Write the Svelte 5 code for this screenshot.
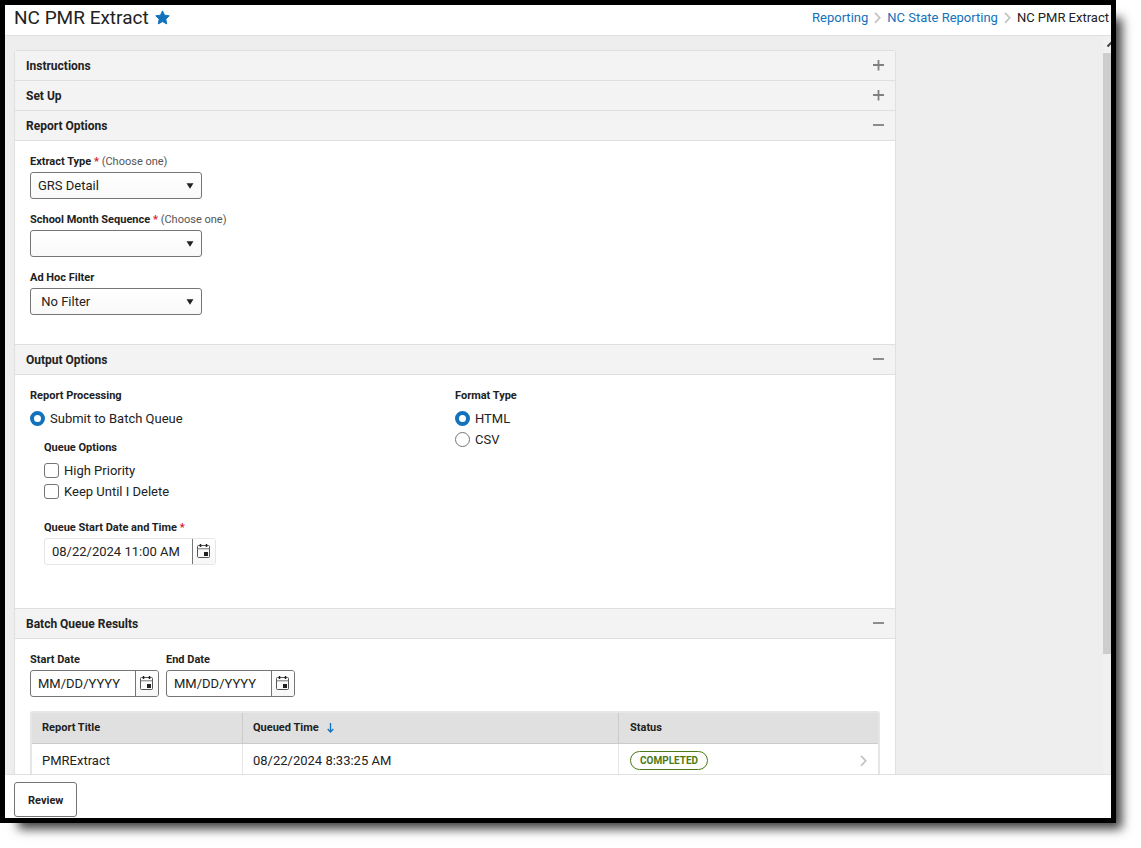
<script lang="ts">
	let open = $state({ instructions: false, setup: false, report: true, output: true, batch: true });

	let extractType = $state('grs');
	let monthSequence = $state('');
	let filter = $state('none');
	let processing = $state('batch');
	let format = $state('html');
	let highPriority = $state(false);
	let keep = $state(false);
	let queueStart = $state('08/22/2024 11:00 AM');

	const results = [{ title: 'PMRExtract', queued: '08/22/2024 8:33:25 AM', status: 'COMPLETED' }];
</script>

{#snippet sectionHead(key: keyof typeof open, title: string)}
	<h2>
		<button type="button" class="section-head" aria-expanded={open[key]} onclick={() => (open[key] = !open[key])}>
			<span>{title}</span>
			<svg width="11" height="11" viewBox="0 0 11 11" aria-hidden="true">
				<path d={open[key] ? 'M0 5H11' : 'M0 5H11M5.5 0V10.5'} stroke="#808080" stroke-width="1.8" />
			</svg>
		</button>
	</h2>
{/snippet}

{#snippet caret()}
	<svg class="caret" width="8" height="6" viewBox="0 0 8 6" aria-hidden="true"><path d="M0.5 0.3h7L4 5.8z" fill="#222" /></svg>
{/snippet}

{#snippet calendar(label: string)}
	<button type="button" class="cal" aria-label={label}>
		<svg width="14" height="15" viewBox="0 0 14 15" fill="none" stroke="#555" aria-hidden="true">
			<rect x="0.5" y="1.5" width="12" height="12" rx="1" />
			<path d="M0.5 4.8H12.5" stroke="#777" />
			<path d="M3.5 0V3M9.5 0V3" stroke="#222" stroke-width="1.5" />
			<rect x="7" y="8" width="4" height="4" fill="#222" stroke="none" />
		</svg>
	</button>
{/snippet}

{#snippet chevron()}
	<svg class="chevron" width="7" height="12" viewBox="0 0 7 12" aria-hidden="true">
		<path d="M1 0.8L5.8 5.8L1 10.8" fill="none" stroke="currentColor" stroke-width="1.7" />
	</svg>
{/snippet}

<div class="page">
	<div class="window">
		<header>
			<h1>NC PMR Extract</h1>
			<svg class="star" width="15" height="15" viewBox="0 0 15 15" aria-hidden="true">
				<path d="M7.5 0.9L9.5 5.2L14.2 5.8L10.8 9.1L11.7 13.9L7.5 11.6L3.3 13.9L4.2 9.1L0.8 5.8L5.5 5.2z" fill="#1272bc" stroke="#1272bc" stroke-linejoin="round" />
			</svg>
			<nav>
				<a href="#reporting">Reporting</a>
				{@render chevron()}
				<a href="#state">NC State Reporting</a>
				{@render chevron()}
				<span>NC PMR Extract</span>
			</nav>
		</header>

		<div class="body">
			<main>
				<div class="panel">
					{@render sectionHead('instructions', 'Instructions')}
					{@render sectionHead('setup', 'Set Up')}

					{@render sectionHead('report', 'Report Options')}
					{#if open.report}
						<section class="report">
							<div class="field">
								<label for="extract">Extract Type <em>*</em> <small>(Choose one)</small></label>
								<div class="select">
									<select id="extract" bind:value={extractType}>
										<option value="grs">GRS Detail</option>
									</select>
									{@render caret()}
								</div>
							</div>
							<div class="field">
								<label for="sequence">School Month Sequence <em>*</em> <small>(Choose one)</small></label>
								<div class="select">
									<select id="sequence" bind:value={monthSequence}>
										<option value=""></option>
									</select>
									{@render caret()}
								</div>
							</div>
							<div class="field">
								<label for="filter">Ad Hoc Filter</label>
								<div class="select">
									<select id="filter" bind:value={filter}>
										<option value="none">{'\u00a0No Filter'}</option>
									</select>
									{@render caret()}
								</div>
							</div>
						</section>
					{/if}

					{@render sectionHead('output', 'Output Options')}
					{#if open.output}
						<section class="output">
							<div>
								<h3>Report Processing</h3>
								<label class="choice"><input type="radio" name="processing" value="batch" bind:group={processing} />Submit to Batch Queue</label>
								<div class="queue">
									<h3>Queue Options</h3>
									<label class="choice"><input type="checkbox" bind:checked={highPriority} />High Priority</label>
									<label class="choice"><input type="checkbox" bind:checked={keep} />Keep Until I Delete</label>
									<div class="field start">
										<label for="queue-start">Queue Start Date and Time <em>*</em></label>
										<div class="date long">
											<input id="queue-start" type="text" bind:value={queueStart} />
											{@render calendar('Pick queue start')}
										</div>
									</div>
								</div>
							</div>
							<div>
								<h3>Format Type</h3>
								<label class="choice"><input type="radio" name="format" value="html" bind:group={format} />HTML</label>
								<label class="choice"><input type="radio" name="format" value="csv" bind:group={format} />CSV</label>
							</div>
						</section>
					{/if}

					{@render sectionHead('batch', 'Batch Queue Results')}
					{#if open.batch}
						<section class="batch">
							<div class="dates">
								<div class="field">
									<label for="start">Start Date</label>
									<div class="date">
										<input id="start" type="text" placeholder="MM/DD/YYYY" />
										{@render calendar('Pick start date')}
									</div>
								</div>
								<div class="field">
									<label for="end">End Date</label>
									<div class="date">
										<input id="end" type="text" placeholder="MM/DD/YYYY" />
										{@render calendar('Pick end date')}
									</div>
								</div>
							</div>
							<table>
								<thead>
									<tr>
										<th class="title">Report Title</th>
										<th class="queued">
											Queued Time
											<svg class="sort" width="7" height="10" viewBox="0 0 7 10" aria-hidden="true">
												<path d="M3.5 0V9M0.7 6L3.5 9L6.3 6" fill="none" stroke="#1272bc" stroke-width="1.3" />
											</svg>
										</th>
										<th>Status</th>
									</tr>
								</thead>
								<tbody>
									{#each results as row}
										<tr>
											<td>{row.title}</td>
											<td>{row.queued}</td>
											<td>
												<div class="status">
													<span class="badge">{row.status}</span>
													{@render chevron()}
												</div>
											</td>
										</tr>
									{/each}
								</tbody>
							</table>
						</section>
					{/if}
				</div>
			</main>
			<div class="scrollbar" aria-hidden="true">
				<svg width="17" height="17" viewBox="0 0 17 17"><path d="M4.5 10.5L8.5 6.5L12.5 10.5" fill="none" stroke="#444" stroke-width="2" /></svg>
				<div class="thumb"></div>
			</div>
		</div>

		<footer>
			<button type="button" class="review">Review</button>
		</footer>
	</div>
</div>

<style>
	:global(body) { background: #fff; }
	.page { box-sizing: border-box; height: 100vh; padding: 0 25px 25px 0; font: 13px/16px Roboto, sans-serif; color: #222; overflow: hidden; }
	.page :global(*) { box-sizing: border-box; }
	.window { display: flex; flex-direction: column; height: 100%; border: 5px solid #000; background: #fff; box-shadow: 12px 12px 10px -6px rgba(0, 0, 0, 0.75); }
	button, input, select { font: inherit; color: inherit; margin: 0; }
	h1, h2, h3 { margin: 0; }

	header { display: flex; align-items: center; height: 31px; padding: 0 2px 5px 9px; border-bottom: 1px solid #e0e0e0; flex: none; }
	h1 { font-size: 19px; line-height: 24px; font-weight: 400; }
	.star { margin-left: 6px; }
	nav { display: flex; align-items: center; margin-left: auto; gap: 6px; white-space: nowrap; }
	a { color: #1272bc; text-decoration: none; }
	.chevron { color: #c4c4c4; flex: none; }

	.body { display: flex; flex: 1; min-height: 0; background: #eee; overflow: hidden; }
	main { flex: 1; min-width: 0; padding: 14px 9px; }
	.panel { max-width: 882px; border: 1px solid #e0e0e0; border-bottom: 0; border-radius: 3px; background: #fff; }
	.section-head { display: flex; align-items: center; justify-content: space-between; width: 100%; height: 30px; padding: 0 11px; border: 0; border-bottom: 1px solid #dfdfdf; background: #f3f3f3; font-size: 12px; font-weight: 700; cursor: pointer; }
	section + h2 .section-head { height: 31px; border-top: 1px solid #dfdfdf; }
	section { padding: 13px 15px; }

	h3, .field label, th { font-size: 11px; line-height: 16px; font-weight: 700; }
	.field label { display: block; margin-bottom: 2px; }
	em { color: #d5202a; font-style: normal; }
	small { font-size: 11px; font-weight: 400; color: #555; }

	.report { display: grid; gap: 13px; padding-bottom: 29px; }
	.select { display: flex; align-items: center; width: 172px; }
	select { appearance: none; width: 100%; height: 27px; padding: 0 24px 0 7px; border: 1px solid #757575; border-radius: 3px; background: linear-gradient(#fff, #f9f9f9); }
	.caret { margin-left: -16px; pointer-events: none; flex: none; }

	.output { display: grid; grid-template-columns: 1fr 1fr; padding-bottom: 43px; }
	.output h3 { margin-bottom: 4px; }
	.choice { display: flex; align-items: center; gap: 5px; height: 21px; }
	.choice input { appearance: none; width: 15px; height: 15px; border: 1px solid #757575; border-radius: 3px; background: #fff; }
	.choice input[type='radio'] { border-radius: 50%; }
	.choice input:checked { border: 4px solid #1272bc; }
	.queue { padding: 11px 0 0 14px; }
	.start { margin-top: 18px; }

	.date { display: flex; width: 129px; height: 27px; border: 1px solid #757575; border-radius: 3px; }
	.date input { flex: 1; min-width: 0; padding: 0 7px; border: 0; background: none; outline: 0; }
	.date input::placeholder { color: #222; opacity: 1; }
	.cal { display: grid; place-items: center; width: 23px; padding: 0; border: 0; border-left: 1px solid #757575; border-radius: 0 2px 2px 0; background: linear-gradient(#fff, #f7f7f7); }
	.long { width: 172px; border-color: #e6e6e6; }

	.dates { display: flex; gap: 7px; margin-bottom: 14px; }
	table { width: 100%; table-layout: fixed; border-collapse: separate; border-spacing: 0; border: 2px solid #e6e6e6; border-radius: 3px; }
	th, td { text-align: left; padding: 0 11px 0 10px; border-right: 1px solid #e6e6e6; }
	th { height: 31px; background: #e0e0e0; border-right-color: #cbcbcb; border-bottom: 1px solid #cbcbcb; }
	td { height: 33px; }
	th:last-child, td:last-child { padding-left: 11px; border-right: 0; }
	.title { width: 211px; }
	.queued { width: 376px; }
	.sort { margin-left: 6px; vertical-align: middle; }
	.status { display: flex; align-items: center; justify-content: space-between; }
	.badge { padding: 0 9px; border: 1px solid #4c7a16; border-radius: 10px; color: #4c7a16; font-size: 10px; line-height: 17px; font-weight: 700; }

	.scrollbar { display: flex; flex-direction: column; width: 8px; background: #f0f0f0; overflow: hidden; flex: none; }
	.scrollbar svg { flex: none; }
	.thumb { flex: 5; background: #cdcdcd; }
	.scrollbar::after { content: ''; flex: 1; }

	footer { padding: 7px 9px 1px; border-top: 1px solid #e0e0e0; flex: none; }
	.review { display: block; height: 35px; padding: 2px 13px 0; border: 1px solid #757575; border-radius: 3px; background: #fff; font-size: 11px; font-weight: 700; }
</style>
